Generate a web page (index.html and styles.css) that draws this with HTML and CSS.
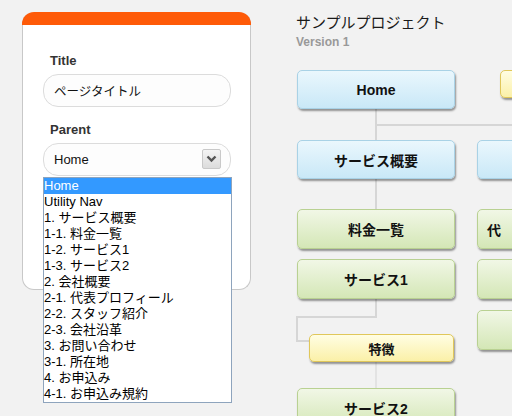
FILE: index.html
```html
<!DOCTYPE html>
<html lang="ja">
<head>
    <meta charset="UTF-8">
    <meta name="viewport" content="width=device-width, initial-scale=1.0">
    <title>サンプルプロジェクト</title>
    <link rel="stylesheet" href="styles.css">
</head>
<body>
    <div class="page">
        <!-- ページ編集パネル -->
        <section class="panel">
            <div class="panel-bar"></div>
            <div class="panel-body">
                <label class="field-label">Title</label>
                <div class="field-input">ページタイトル</div>

                <label class="field-label">Parent</label>
                <div class="field-select">
                    <span>Home</span>
                    <span class="select-arrow">
                        <svg width="11" height="8" viewBox="0 0 11 8"><path d="M1.5 1.5 L5.5 5.5 L9.5 1.5" fill="none" stroke="#555" stroke-width="2.4"/></svg>
                    </span>
                    <ul class="select-list">
                        <li class="selected">Home</li>
                        <li>Utility Nav</li>
                        <li>1. サービス概要</li>
                        <li>1-1. 料金一覧</li>
                        <li>1-2. サービス1</li>
                        <li>1-3. サービス2</li>
                        <li>2. 会社概要</li>
                        <li>2-1. 代表プロフィール</li>
                        <li>2-2. スタッフ紹介</li>
                        <li>2-3. 会社沿革</li>
                        <li>3. お問い合わせ</li>
                        <li>3-1. 所在地</li>
                        <li>4. お申込み</li>
                        <li>4-1. お申込み規約</li>
                    </ul>
                </div>
            </div>
        </section>

        <!-- サイトマップ -->
        <section class="sitemap">
            <h1 class="project-name">サンプルプロジェクト</h1>
            <div class="project-version">Version 1</div>

            <div class="canvas">
                <div class="line v" style="left:79px;top:49px;height:31px"></div>
                <div class="line h" style="left:79px;top:64px;width:140px"></div>
                <div class="line v" style="left:79px;top:119px;height:30px"></div>
                <div class="line v" style="left:79px;top:239px;height:18px"></div>
                <div class="line h" style="left:0;top:256px;width:81px"></div>
                <div class="line v" style="left:0;top:256px;height:26px"></div>
                <div class="line h" style="left:0;top:280px;width:14px"></div>
                <div class="line v faint" style="left:79px;top:302px;height:26px"></div>

                <div class="node blue" style="left:1px;top:10px">Home</div>
                <div class="node yellow" style="left:204px;top:10px"></div>
                <div class="node blue" style="left:1px;top:80px">サービス概要</div>
                <div class="node blue" style="left:181px;top:80px"></div>
                <div class="node green" style="left:1px;top:149px">料金一覧</div>
                <div class="node green start" style="left:181px;top:149px">代</div>
                <div class="node green" style="left:1px;top:199px">サービス1</div>
                <div class="node green" style="left:181px;top:199px"></div>
                <div class="node green" style="left:181px;top:250px"></div>
                <div class="node yellow small" style="left:13px;top:274px">特徴</div>
                <div class="node green" style="left:1px;top:328px">サービス2</div>
            </div>
        </section>
    </div>
</body>
</html>
```

FILE: styles.css
```css
        body {
            margin: 0;
            font-family: "Liberation Sans", Arial, "Noto Sans CJK JP", sans-serif;
            background-color: #f2f2f2;
            color: #222;
            overflow: hidden;
        }

        .page {
            display: flex;
            align-items: flex-start;
            padding: 12px 0 0 22px;
            height: 404px;
        }

        .panel {
            width: 227px;
            height: 277px;
            background: #fff;
            border: 1px solid #c8c8c8;
            border-top: none;
            border-radius: 12px;
            flex-shrink: 0;
        }

        .panel-bar {
            height: 13px;
            background: #fe5a08;
            border-radius: 12px 12px 0 0;
            margin: 0 -1px;
        }

        .panel-body {
            display: flex;
            flex-direction: column;
            padding: 28px 19px 0 20px;
        }

        .field-label {
            font-size: 13px;
            font-weight: bold;
            line-height: 16px;
            color: #333;
            padding-left: 7px;
            margin-bottom: 5px;
        }

        .field-input, .field-select {
            height: 31px;
            border: 1px solid #dcdcdc;
            border-radius: 15px;
            display: flex;
            align-items: center;
            padding: 0 9px 0 10px;
            font-size: 13px;
            color: #111;
            background: #fdfdfd;
        }

        .field-input {
            margin-bottom: 15px;
            font-family: "Noto Sans CJK JP", sans-serif;
            font-size: 12.5px;
        }

        .field-select {
            justify-content: space-between;
            position: relative;
        }

        .select-arrow {
            width: 17px;
            height: 18px;
            border: 1px solid #c9c9c9;
            border-radius: 2px;
            background: linear-gradient(#f4f4f4, #dcdcdc);
            display: flex;
            align-items: center;
            justify-content: center;
            margin-top: -1px;
        }

        .select-list {
            position: absolute;
            left: -1px;
            top: 33px;
            width: 187px;
            margin: 0;
            padding: 0;
            list-style: none;
            background: #fff;
            border: 1px solid #8ea4bd;
            z-index: 2;
        }

        .select-list li {
            height: 16px;
            line-height: 16px;
            font-size: 13px;
            color: #000;
            white-space: nowrap;
            font-family: "Liberation Sans", Arial, "Noto Sans CJK JP", sans-serif;
        }

        .select-list li.selected {
            background: #3399ff;
            color: #fff;
        }

        .sitemap {
            margin-left: 45px;
            flex: 1;
        }

        .project-name {
            margin: 0;
            font-size: 15px;
            font-weight: normal;
            line-height: 20px;
            color: #1a1a1a;
            font-family: "Noto Sans CJK JP", sans-serif;
        }

        .project-version {
            font-size: 12px;
            font-weight: bold;
            color: #999;
            line-height: 14px;
            margin-top: 3px;
        }

        .canvas {
            position: relative;
            margin-top: 11px;
            height: 360px;
        }

        .line {
            position: absolute;
            background: #d6d6d6;
        }

        .line.v {
            width: 2px;
        }

        .line.h {
            height: 2px;
        }

        .line.faint {
            background: #e3e3e3;
        }

        .node {
            position: absolute;
            width: 156px;
            height: 37px;
            border: 1px solid;
            border-radius: 5px;
            box-shadow: 1px 2px 2px rgba(0, 0, 0, 0.4);
            display: flex;
            align-items: center;
            justify-content: center;
            font-size: 14px;
            font-weight: bold;
            color: #111;
            white-space: nowrap;
            overflow: hidden;
            font-family: "Liberation Sans", Arial, "Noto Sans CJK JP", sans-serif;
        }

        .node.start {
            justify-content: flex-start;
            padding-left: 9px;
            width: 147px;
        }

        .node.blue {
            background: linear-gradient(#eaf7fd, #c9e8f7);
            border-color: #a9d2e6;
        }

        .node.green {
            height: 38px;
            background: linear-gradient(#f1f7e6, #d4e7b6);
            border-color: #b9d192;
        }

        .node.yellow {
            height: 26px;
            background: linear-gradient(#fffde3, #fbf0a8);
            border-color: #e0c75a;
        }

        .node.small {
            width: 143px;
            font-size: 13px;
        }
```
